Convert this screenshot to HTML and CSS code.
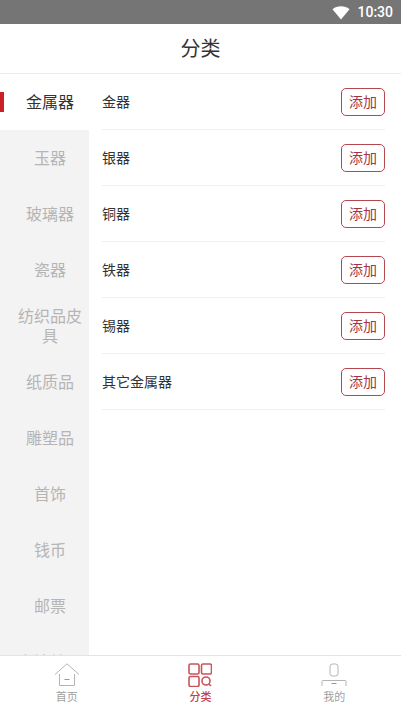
FILE: index.html
```html
<!DOCTYPE html>
<html lang="zh">
<head>
<meta charset="utf-8">
<title>分类</title>
<link rel="stylesheet" href="styles.css">
</head>
<body>
<div class="app">
  <div class="status">
    <svg class="wifi" width="18" height="14" viewBox="0 0 18 14"><path d="M0.5 3.2C3 1.2 5.8 0.3 9 0.3s6 .9 8.5 2.9L9 13.6z" fill="#fff"/></svg>
    <span class="time">10:30</span>
  </div>
  <header class="title">分类</header>
  <main class="body">
    <nav class="side">
      <div class="cat active">金属器</div>
      <div class="cat">玉器</div>
      <div class="cat">玻璃器</div>
      <div class="cat">瓷器</div>
      <div class="cat">纺织品皮具</div>
      <div class="cat">纸质品</div>
      <div class="cat">雕塑品</div>
      <div class="cat">首饰</div>
      <div class="cat">钱币</div>
      <div class="cat">邮票</div>
      <div class="cat">书法绘画</div>
    </nav>
    <section class="list">
      <div class="row"><span class="label">金器</span><button class="add">添加</button></div>
      <div class="row"><span class="label">银器</span><button class="add">添加</button></div>
      <div class="row"><span class="label">铜器</span><button class="add">添加</button></div>
      <div class="row"><span class="label">铁器</span><button class="add">添加</button></div>
      <div class="row"><span class="label">锡器</span><button class="add">添加</button></div>
      <div class="row"><span class="label">其它金属器</span><button class="add">添加</button></div>
    </section>
  </main>
  <footer class="tabs">
    <div class="tab">
      <svg width="26" height="24" viewBox="0 0 26 24" fill="none" stroke="#b4b4b4" stroke-width="1"><path d="M1 11.5L13 .8l12 10.7"/><path d="M5.500 11v11.500h15V11"/><path d="M10.500 16.500h5" stroke="#999"/></svg>
      <span>首页</span>
    </div>
    <div class="tab on">
      <svg width="24" height="24" viewBox="0 0 24 24" fill="none" stroke="#c9545c" stroke-width="1.6"><rect x="1" y="1" width="10" height="10" rx="1.500"/><rect x="13.500" y="1" width="10" height="10" rx="1.500"/><rect x="1" y="13.500" width="10" height="10" rx="1.500"/><circle cx="18" cy="18" r="4"/><path d="M21 21l2 2"/></svg>
      <span>分类</span>
    </div>
    <div class="tab">
      <svg width="26" height="24" viewBox="0 0 26 24" fill="none" stroke="#b4b4b4" stroke-width="1"><rect x="9" y="1" width="8" height="12" rx="2.500"/><path d="M1 23v-4.500q0-1 1-1h22q1 0 1 1V23"/><path d="M10.500 20.500h5" stroke="#999"/></svg>
      <span>我的</span>
    </div>
  </footer>
</div>
</body>
</html>
```
FILE: styles.css
```css
* { box-sizing: border-box; }
html, body { margin: 0; padding: 0; height: 100%; }
body { font-family: "Roboto", "Noto Sans CJK SC", sans-serif; background: #fff; overflow: hidden; }
.app { display: flex; flex-direction: column; height: 710px; }
.status { flex: none; height: 24px; background: #757575; display: flex; align-items: center; justify-content: flex-end; padding-right: 8px; gap: 7px; }
.time { color: #fff; font-size: 14px; font-weight: 500; }
.wifi { margin-top: 1px; }
.title { flex: none; height: 50px; padding-bottom: 2px; display: flex; align-items: center; justify-content: center; border-bottom: 1px solid #ececec; font-size: 20px; color: #333; }
.body { flex: 1; min-height: 0; display: flex; overflow: hidden; }
.side { flex: none; width: 89px; background: #f3f3f3; overflow: hidden; }
.cat { position: relative; height: 56px; padding: 2px 0 0 11px; display: flex; align-items: center; justify-content: center; text-align: center; font-size: 16px; line-height: 20px; color: #b5b5b5; }
.cat.active { background: #fff; color: #333; }
.cat.active::before { content: ""; position: absolute; left: 0; top: 18px; width: 4px; height: 20px; background: #cc2027; }
.list { flex: 1; min-width: 0; padding: 0 16px 0 13px; }
.row { height: 56px; display: flex; align-items: center; justify-content: space-between; border-bottom: 1px solid #efefef; font-size: 14px; color: #333; }
.label { padding-bottom: 2px; }
.add { width: 44px; height: 28px; padding: 0; background: #fff; border: 1px solid #b5474f; border-radius: 5px; color: #a8343f; font: inherit; font-size: 14px; line-height: 26px; }
.tabs { flex: none; height: 55px; border-top: 1px solid #e3e3e3; display: grid; grid-template-columns: repeat(3, 1fr); background: #fff; }
.tab { display: flex; flex-direction: column; align-items: center; padding-top: 7px; font-size: 11px; line-height: 14px; color: #a0a0a0; }
.tab svg { display: block; margin-bottom: 4px; }
.tab.on { color: #c4424b; font-weight: 500; }
```
